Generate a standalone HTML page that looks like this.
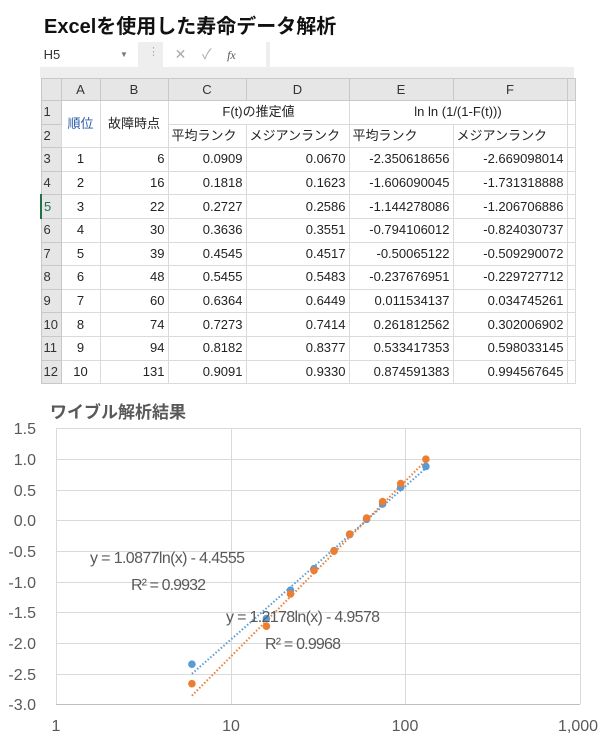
<!DOCTYPE html>
<html><head><meta charset="utf-8"><style>
body{margin:0;width:614px;height:747px;background:#fff;position:relative;overflow:hidden;font-family:"Liberation Sans","Noto Sans CJK JP",sans-serif}
.a{position:absolute}
table{position:absolute;left:40px;top:78px;border-collapse:collapse;table-layout:fixed;font-size:13px;color:#222}
td{border:1px solid #dadada;padding:0 3px;height:22.6px;line-height:20px;white-space:nowrap;overflow:hidden}
tr.h td{background:#e6e6e6;text-align:center;border-color:#c8c8c8;height:21px;color:#333}
td.r{background:#e6e6e6;text-align:left;border-color:#c8c8c8;padding:0 2px;color:#333}
.n{text-align:right}.c{text-align:center}
</style></head><body>
<div class="a" style="left:44px;top:10px;font-size:20px;font-weight:bold;color:#111">Excelを使用した寿命データ解析</div>
<div class="a" style="left:40px;top:42px;width:534px;height:36px;background:#eeeeee"></div>
<div class="a" style="left:40px;top:42px;width:98px;height:25px;background:#fff;font-size:13px;line-height:25px;color:#333">&nbsp;H5<span style="position:absolute;left:80px;font-size:8px;color:#777">▼</span></div>
<div class="a" style="left:148px;top:45px;font-size:11px;color:#aaa">⋮</div>
<div class="a" style="left:163px;top:42px;width:103px;height:25px;background:#fff;font-size:14px;line-height:25px;color:#aaa">&nbsp;&nbsp;&nbsp;✕&nbsp;&nbsp;&nbsp;&nbsp;✓&nbsp;&nbsp;&nbsp;&nbsp;<i style="font-family:'Liberation Serif';color:#555;font-size:12px">fx</i></div>
<div class="a" style="left:270px;top:42px;width:304px;height:25px;background:#fff"></div>
<table>
<colgroup><col style="width:20px"><col style="width:39px"><col style="width:68px"><col style="width:78px"><col style="width:103px"><col style="width:104px"><col style="width:114px"><col style="width:8px"></colgroup>
<tr class="h"><td style="background:#e6e6e6"></td><td>A</td><td>B</td><td>C</td><td>D</td><td>E</td><td>F</td><td></td></tr>
<tr><td class="r">1</td><td rowspan="2" class="c" style="color:#2a5aa8">順位</td><td rowspan="2" class="c">故障時点</td><td colspan="2" class="c">F(t)の推定値</td><td colspan="2" class="c">ln ln (1/(1-F(t)))</td><td></td></tr>
<tr><td class="r">2</td><td>平均ランク</td><td>メジアンランク</td><td>平均ランク</td><td>メジアンランク</td><td></td></tr>
<tr><td class="r">3</td><td class="c">1</td><td class="n">6</td><td class="n">0.0909</td><td class="n">0.0670</td><td class="n">-2.350618656</td><td class="n">-2.669098014</td><td></td></tr>
<tr><td class="r">4</td><td class="c">2</td><td class="n">16</td><td class="n">0.1818</td><td class="n">0.1623</td><td class="n">-1.606090045</td><td class="n">-1.731318888</td><td></td></tr>
<tr><td class="r" style="color:#217346;border-left:2px solid #217346">5</td><td class="c">3</td><td class="n">22</td><td class="n">0.2727</td><td class="n">0.2586</td><td class="n">-1.144278086</td><td class="n">-1.206706886</td><td></td></tr>
<tr><td class="r">6</td><td class="c">4</td><td class="n">30</td><td class="n">0.3636</td><td class="n">0.3551</td><td class="n">-0.794106012</td><td class="n">-0.824030737</td><td></td></tr>
<tr><td class="r">7</td><td class="c">5</td><td class="n">39</td><td class="n">0.4545</td><td class="n">0.4517</td><td class="n">-0.50065122</td><td class="n">-0.509290072</td><td></td></tr>
<tr><td class="r">8</td><td class="c">6</td><td class="n">48</td><td class="n">0.5455</td><td class="n">0.5483</td><td class="n">-0.237676951</td><td class="n">-0.229727712</td><td></td></tr>
<tr><td class="r">9</td><td class="c">7</td><td class="n">60</td><td class="n">0.6364</td><td class="n">0.6449</td><td class="n">0.011534137</td><td class="n">0.034745261</td><td></td></tr>
<tr><td class="r">10</td><td class="c">8</td><td class="n">74</td><td class="n">0.7273</td><td class="n">0.7414</td><td class="n">0.261812562</td><td class="n">0.302006902</td><td></td></tr>
<tr><td class="r">11</td><td class="c">9</td><td class="n">94</td><td class="n">0.8182</td><td class="n">0.8377</td><td class="n">0.533417353</td><td class="n">0.598033145</td><td></td></tr>
<tr><td class="r">12</td><td class="c">10</td><td class="n">131</td><td class="n">0.9091</td><td class="n">0.9330</td><td class="n">0.874591383</td><td class="n">0.994567645</td><td></td></tr>
</table>
<div class="a" style="left:0;top:386px;width:614px;height:361px;background:#fff"></div>
<svg class="a" style="left:0;top:0" width="614" height="747" font-family="Liberation Sans, sans-serif">
<text x="50" y="418" font-size="17" font-weight="bold" fill="#595959" font-family="Liberation Sans, Noto Sans CJK JP, sans-serif">ワイブル解析結果</text>
<g stroke="#d9d9d9" stroke-width="1">
<line x1="56" y1="428.5" x2="580" y2="428.5"/><line x1="56" y1="459.5" x2="580" y2="459.5"/><line x1="56" y1="490.5" x2="580" y2="490.5"/><line x1="56" y1="520.5" x2="580" y2="520.5"/><line x1="56" y1="551.5" x2="580" y2="551.5"/><line x1="56" y1="582.5" x2="580" y2="582.5"/><line x1="56" y1="612.5" x2="580" y2="612.5"/><line x1="56" y1="643.5" x2="580" y2="643.5"/><line x1="56" y1="674.5" x2="580" y2="674.5"/>
<line x1="56.5" y1="428" x2="56.5" y2="704"/><line x1="231.5" y1="428" x2="231.5" y2="704"/><line x1="405.5" y1="428" x2="405.5" y2="704"/><line x1="580.5" y1="428" x2="580.5" y2="704"/>
</g>
<line x1="56" y1="704.5" x2="580" y2="704.5" stroke="#bfbfbf"/>
<g font-size="16" fill="#595959" text-anchor="end">
<text x="36" y="434">1.5</text><text x="36" y="465">1.0</text><text x="36" y="496">0.5</text><text x="36" y="526">0.0</text><text x="36" y="557">-0.5</text><text x="36" y="588">-1.0</text><text x="36" y="618">-1.5</text><text x="36" y="649">-2.0</text><text x="36" y="680">-2.5</text><text x="36" y="710">-3.0</text>
</g>
<g font-size="16" fill="#595959" text-anchor="middle">
<text x="56" y="731">1</text><text x="231" y="731">10</text><text x="405" y="731">100</text><text x="578" y="731">1,000</text>
</g>
<line x1="191.9" y1="673.8" x2="425.9" y2="468.1" stroke="#5b9bd5" stroke-width="2" stroke-dasharray="1.5 2"/>
<line x1="191.9" y1="695.7" x2="425.9" y2="460.5" stroke="#ed7d31" stroke-width="2" stroke-dasharray="1.5 2"/>
<g fill="#5b9bd5">
<circle cx="191.9" cy="664.2" r="3.8"/><circle cx="266.4" cy="618.5" r="3.8"/><circle cx="290.5" cy="590.2" r="3.8"/><circle cx="314" cy="568.7" r="3.8"/><circle cx="334" cy="550.7" r="3.8"/><circle cx="349.7" cy="534.6" r="3.8"/><circle cx="366.6" cy="519.3" r="3.8"/><circle cx="382.6" cy="503.9" r="3.8"/><circle cx="400.7" cy="487.3" r="3.8"/><circle cx="425.9" cy="466.4" r="3.8"/>
</g>
<g fill="#ed7d31">
<circle cx="191.9" cy="683.7" r="3.8"/><circle cx="266.4" cy="626.2" r="3.8"/><circle cx="290.5" cy="594" r="3.8"/><circle cx="314" cy="570.5" r="3.8"/><circle cx="334" cy="551.2" r="3.8"/><circle cx="349.7" cy="534.1" r="3.8"/><circle cx="366.6" cy="518.1" r="3.8"/><circle cx="382.6" cy="501.6" r="3.8"/><circle cx="400.7" cy="483.5" r="3.8"/><circle cx="425.9" cy="459.2" r="3.8"/>
</g>
<g font-size="16" fill="#595959">
<text x="90" y="563" textLength="155">y = 1.0877ln(x) - 4.4555</text>
<text x="131" y="590" textLength="75">R² = 0.9932</text>
<text x="226" y="622" textLength="154">y = 1.2178ln(x) - 4.9578</text>
<text x="265" y="649" textLength="76">R² = 0.9968</text>
</g>
</svg>
</body></html>
